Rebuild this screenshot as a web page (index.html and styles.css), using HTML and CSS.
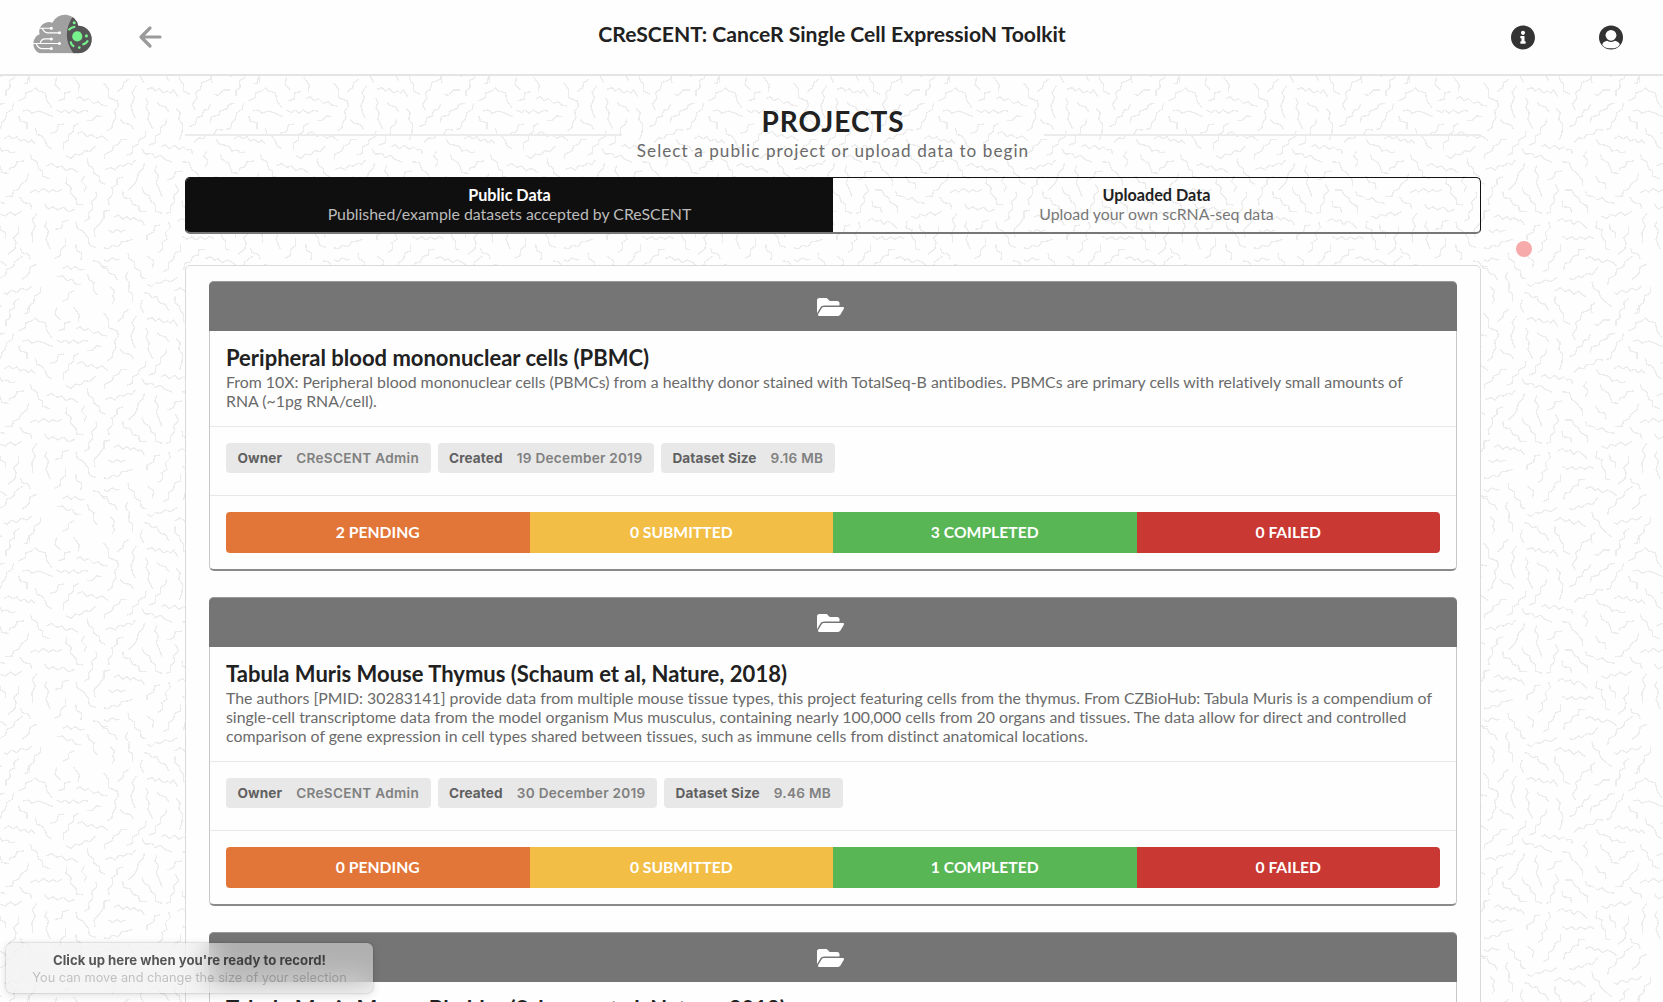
FILE: index.html
```html
<!DOCTYPE html>
<html lang="en">
<head>
<meta charset="utf-8">
<title>CReSCENT</title>
<link rel="stylesheet" href="styles.css">
</head>
<body>
<svg class="backdrop" aria-hidden="true">
<defs>
<pattern id="squiggles" width="690" height="690" patternUnits="userSpaceOnUse" patternTransform="translate(0 76) scale(.33333)">
<g id="strokes" fill="none" stroke="#ececec" stroke-width="4" shape-rendering="crispEdges">
<path transform="translate(306 0)" d="M5 20 20 40 20 65 45 75 50 90 38 105 42 125 32 140 30 155 15 165M80 10 65 20 62 35 45 48M103 30 90 50 97 65 87 90 92 110 100 125M135 40 150 35 160 45 172 38 185 50 198 45 205 52 215 42 228 62M330 0 325 10 300 20 295 40 280 50 285 65 272 85 280 102M335 55 350 58 365 42 385 42M473 -22 473 20M440 75 460 65 462 50 480 45 490 35 500 45 520 50 525 75 540 95M130 65 138 78 132 95 142 110 138 130 152 158M165 78 172 88 190 92 200 108M222 98 235 110 230 130 242 145 240 170 232 192M325 85 318 100 305 103 300 120 285 125 280 145 262 152M400 82 380 85 375 98 355 105 350 118 328 122 325 140M425 82 420 100 405 110 400 130 390 140 385 158 372 160M452 105 468 102 480 112 500 105 515 110 525 115 543 122M440 120 445 135 465 140 465 160M55 130 65 142 85 145 95 160M195 128 190 145 175 155 175 172 160 180 160 200 140 208M490 155 495 175 510 180 520 195 525 210 540 218M132 165 130 182 112 190 108 205 92 212 90 232 75 238M275 200 290 185 305 188 315 175 335 175 345 160 362 162M75 190 58 190 50 205 35 210 30 225 8 235 8 250M178 212 190 205 202 218 218 208 230 220 245 212 255 222 268 220 272 235M343 190 352 205 372 208 385 215 390 225 405 222 415 230 430 228M397 188 410 180 422 188 435 182 445 195 458 190 470 200 478 192 490 205M120 218 130 235 150 232 160 245 175 238 188 250 210 258M315 225 305 240 318 255 310 272M355 235 360 250 378 260 385 275 390 290 410 292M455 255 435 258 430 272 415 275 412 285M475 235 480 250 495 258 500 280 512 285 512 300 533 308M10 280 25 275 40 282 50 268 65 270 78 262 90 265 100 252M127 260 125 275 110 290 105 310 98 325 78 342M165 268 158 285 170 300 163 320 172 340 180 362M240 257 262 260 268 278 282 290 300 310 302 330M240 285 220 288 215 305 197 312M63 302 45 310 45 325 30 335 32 355 18 370 22 388M342 300 350 318 370 322 372 340M470 292 465 310 448 325 440 340 425 345 420 360 398 362M473 350 490 342 500 348 515 337 530 348 543 342 554 347 569 340M120 335 125 350 142 360 148 378 160 385 160 405 180 412M220 325 230 345 215 360 218 378 205 390 205 408 192 413M62 345 65 365 85 368 92 385 110 390 112 405 135 407M250 342 270 342 278 358 290 365 295 380 315 390 317 412M310 345 315 358 335 362 345 372 360 365 375 378 398 382M240 375 243 392 265 395 270 412M443 362 455 380 475 383 480 400M35 425 50 417 62 430 75 422 85 432 95 425 110 435 117 432 128 447M25 402 8 405 8 428M358 420 375 428 385 415 400 420 415 408 430 418 450 405M225 437 240 427 252 437 265 432 275 445 288 435 300 443 315 457M20 462 32 470 45 460 55 468 70 462M175 447 158 450 155 468 135 478 135 492M345 435 342 455 360 462 358 480 370 495 370 518 385 522M383 445 385 462 400 470 400 487M495 412 480 432 490 450 480 470 482 502M525 435 518 450 530 465 522 490 535 520M440 450 440 470 425 485 432 500 428 520 407 535M200 437 205 455 190 470 195 490 180 500 182 520 167 530M240 480 255 490 270 482 282 492 295 483 310 490 322 482 335 487M5 515 20 518 32 508 48 512 60 497 75 495 92 490M235 505 235 525 218 532 215 550 200 560 200 580 182 587M445 515 450 530 470 535 475 550M5 550 18 557 30 546 42 552 55 550M78 530 80 548 98 558 98 575 115 585 118 605 132 608M135 540 155 555 152 575M310 520 290 522 288 537 272 542 265 558 248 562 245 582M310 548 325 542 340 553 350 548 360 560 375 552 390 558 403 570M452 540 428 558 425 572 405 580 400 598 380 608 377 628M0 575 15 578 22 592 40 598 45 612M495 565 475 572 470 595 450 610M77 588 70 605 82 620 80 645 92 655 92 677M260 608 275 610 290 600 300 605 315 592 330 595 348 575M135 625 148 632 160 620 175 622 190 612 205 617 225 605M25 632 38 645 32 660 38 670 30 683M330 618 335 638 350 645 355 662 365 672 388 693M218 645 235 635 250 647 262 640 275 655 290 645 300 655 310 663M395 650 405 655 420 642 435 650 448 637 465 642 480 630M125 650 140 652 150 665 165 662 172 680 190 685 200 705M505 632 505 650 488 660 485 680 470 690 465 712 455 713M220 660 218 680 232 690 235 705 245 715 245 735 265 745M440 668 425 680 428 695 412 705 415 725 402 733 402 750M340 680 325 690 330 710M120 672 115 690 125 710"/>
<path transform="translate(0 12)" d="M170 -10 165 15 182 30M220 -10 238 15 235 35M212 35 195 38 192 58 175 62M228 57 240 50 252 62 265 55 280 70 295 65 305 75 320 78M170 90 185 98 195 90 207 100 220 90 235 100 250 92 265 93M260 122 275 122 290 107 305 110M192 132 175 135 170 155 150 160M238 130 222 137 220 155 205 165 205 180 190 190 190 210M232 160 248 155 262 170 275 163 290 175 305 168 325 182M198 228 215 235 225 222 240 225 255 212 270 215 288 198M262 235 265 255 280 265 282 280 298 290 300 305 315 312M140 258 155 250 170 262 185 258 198 272 215 265 235 278M200 290 198 310 213 322 212 340 228 355 230 372 248 375M252 288 245 305 260 320 252 335M288 335 290 350 275 365 278 385 265 400 268 415 252 425M133 372 145 388 160 380 172 390 190 382 205 395 225 388M330 390 312 395 310 415 300 430 282 450 285 470M208 420 188 425 185 445 165 448M228 425 232 445 250 455 265 475 268 495 288 503M197 475 197 497 182 508 180 528 165 535M227 492 230 512 245 520 243 540M280 543 295 545 305 558 325 560M190 565 203 558 212 568 226 560 240 570 256 568M262 582 268 600 282 608 280 630 292 645M170 590 188 588 200 602 216 598 226 612 244 614M222 632 205 640 206 656 190 664"/>
</g>
<use href="#strokes" x="-690"/><use href="#strokes" y="-690"/><use href="#strokes" x="-690" y="-690"/>
</pattern>
<symbol id="folder" viewBox="0 0 576 512"><path fill="#fff" d="M572.694 292.093L500.27 416.248A63.997 63.997 0 0 1 444.989 448H45.025c-18.523 0-30.064-20.093-20.731-36.093l72.424-124.155A64 64 0 0 1 152 256h399.964c18.523 0 30.064 20.093 20.73 36.093zM152 224h328v-48c0-26.51-21.49-48-48-48H272l-64-64H48C21.49 64 0 85.49 0 112v278.046l69.077-118.418C86.214 242.25 117.989 224 152 224z"/></symbol>
</defs>
<rect width="100%" height="100%" fill="url(#squiggles)"/>
</svg>

<header class="nav">
  <div class="nav-side">
    <svg class="logo" viewBox="0 0 60 40">
      <defs><clipPath id="cloud"><path d="M8.500 39.500A8 9.500 0 0 1 8.500 21 9.500 9.500 0 0 1 21 9.500 13.500 13.500 0 0 1 46.500 12.500 13.200 13.500 0 0 1 46.500 39.500Z"/></clipPath></defs>
      <g clip-path="url(#cloud)">
        <rect width="60" height="40" fill="#a0a0a0"/>
        <path fill="#555" d="M42 2Q28.500 22 42 40H60V2Z"/>
      </g>
      <g fill="none" stroke="#fff" stroke-width="1.200"><path d="M8 15H20M11 15Q13 19.500 17 19.500H27M0 30H28M5 30Q7 35 11 35H20M9 30Q10 25.500 14 25.500H20"/></g>
      <g fill="#fff"><circle cx="20" cy="15" r="1.500"/><circle cx="28" cy="19.500" r="1.500"/><circle cx="20" cy="25.500" r="1.500"/><circle cx="28" cy="30" r="1.500"/><circle cx="20" cy="35" r="1.500"/></g>
      <g fill="#77f28d"><circle cx="45.500" cy="23" r="5"/><circle cx="42.500" cy="9.500" r="1.500"/><circle cx="54.500" cy="22.500" r="1.500"/><circle cx="47.500" cy="34" r="1.300"/></g>
      <path d="M37 17Q39 14 43.500 13.500M39 28Q39.500 32 42.500 33M50.500 31Q54.500 30.500 56 27" fill="none" stroke="#77f28d" stroke-width="2"/>
    </svg>
    <svg class="back" viewBox="0 0 24 24"><path fill="none" stroke="#9a9a9a" stroke-width="3.200" stroke-linecap="round" stroke-linejoin="round" d="M12 3 3 12 12 21M3.500 12H22"/></svg>
  </div>
  <h1 class="nav-title">CReSCENT: CanceR Single Cell ExpressioN Toolkit</h1>
  <div class="nav-side nav-right">
    <svg class="round" viewBox="8 8 496 496"><path fill="#333" d="M256 8C119.043 8 8 119.083 8 256c0 136.997 111.043 248 248 248s248-111.003 248-248C504 119.083 392.957 8 256 8zm0 110c23.196 0 42 18.804 42 42s-18.804 42-42 42-42-18.804-42-42 18.804-42 42-42zm56 254c0 6.627-5.373 12-12 12h-88c-6.627 0-12-5.373-12-12v-24c0-6.627 5.373-12 12-12h12v-64h-12c-6.627 0-12-5.373-12-12v-24c0-6.627 5.373-12 12-12h64c6.627 0 12 5.373 12 12v100h12c6.627 0 12 5.373 12 12v24z"/></svg>
    <svg class="round" viewBox="0 0 24 24"><circle cx="12" cy="12" r="12" fill="#333"/><ellipse cx="12" cy="18.800" rx="8.600" ry="4" fill="#fff"/><circle cx="12" cy="9.900" r="6.600" fill="#333"/><circle cx="12" cy="9.800" r="5.400" fill="#fff"/></svg>
  </div>
</header>

<main class="page">
  <div class="heading">
    <div class="heading-text">
      <h2 class="heading-title">PROJECTS</h2>
      <p class="heading-sub">Select a public project or upload data to begin</p>
    </div>
  </div>
  <div class="tabs">
    <div class="tab tab-active"><b class="tab-name">Public Data</b><span class="tab-note">Published/example datasets accepted by CReSCENT</span></div>
    <div class="tab"><b class="tab-name">Uploaded Data</b><span class="tab-note">Upload your own scRNA-seq data</span></div>
  </div>
  <section class="panel">
    <article class="card">
      <div class="card-top"><svg class="folder"><use href="#folder"/></svg></div>
      <div class="card-body">
        <h3 class="card-title">Peripheral blood mononuclear cells (PBMC)</h3>
        <p class="card-text">From 10X: Peripheral blood mononuclear cells (PBMCs) from a healthy donor stained with TotalSeq-B antibodies. PBMCs are primary cells with relatively small amounts of<br>RNA (~1pg RNA/cell).</p>
      </div>
      <div class="labels">
        <span class="label"><b>Owner</b>CReSCENT Admin</span>
        <span class="label"><b>Created</b>19 December 2019</span>
        <span class="label"><b>Dataset Size</b>9.16 MB</span>
      </div>
      <div class="status"><div class="bar"><span class="pending">2 PENDING</span><span class="submitted">0 SUBMITTED</span><span class="completed">3 COMPLETED</span><span class="failed">0 FAILED</span></div></div>
    </article>
    <article class="card">
      <div class="card-top"><svg class="folder"><use href="#folder"/></svg></div>
      <div class="card-body">
        <h3 class="card-title">Tabula Muris Mouse Thymus (Schaum et al, Nature, 2018)</h3>
        <p class="card-text">The authors [PMID: 30283141] provide data from multiple mouse tissue types, this project featuring cells from the thymus. From CZBioHub: Tabula Muris is a compendium of<br>single-cell transcriptome data from the model organism Mus musculus, containing nearly 100,000 cells from 20 organs and tissues. The data allow for direct and controlled<br>comparison of gene expression in cell types shared between tissues, such as immune cells from distinct anatomical locations.</p>
      </div>
      <div class="labels">
        <span class="label"><b>Owner</b>CReSCENT Admin</span>
        <span class="label"><b>Created</b>30 December 2019</span>
        <span class="label"><b>Dataset Size</b>9.46 MB</span>
      </div>
      <div class="status"><div class="bar"><span class="pending">0 PENDING</span><span class="submitted">0 SUBMITTED</span><span class="completed">1 COMPLETED</span><span class="failed">0 FAILED</span></div></div>
    </article>
    <article class="card">
      <div class="card-top"><svg class="folder"><use href="#folder"/></svg></div>
      <div class="card-body">
        <h3 class="card-title">Tabula Muris Mouse Bladder (Schaum et al, Nature, 2018)</h3>
      </div>
    </article>
  </section>
</main>

<i class="pointer"></i>
<aside class="hint"><b class="hint-main">Click up here when you're ready to record!</b><span class="hint-sub">You can move and change the size of your selection</span></aside>
</body>
</html>
```

FILE: styles.css
```css
* { box-sizing: border-box; }
body {
  margin: 0;
  height: 1002px;
  overflow: hidden;
  background: #fefefe;
  color: #212121;
  font-family: Lato, "Liberation Sans", sans-serif;
  font-size: 15.860px;
  font-variant-ligatures: none;
}
h1, h2, h3, p { margin: 0; }
svg { display: block; }
.backdrop { position: absolute; inset: 0; width: 100%; height: 100%; z-index: -1; }

.nav {
  display: grid;
  grid-template-columns: 1fr auto 1fr;
  height: 76px;
  padding: 0 32px 2px;
  background: #fefefe;
  border-bottom: 2px solid #e4e4e4;
}
.nav-side { display: flex; align-items: flex-start; }
.logo { width: 61px; height: 40.700px; margin: 13px 0 0 -1px; }
.back { width: 24px; height: 24px; margin: 25px 0 0 46px; }
.nav-title { padding: 20.600px 0 0 1px; font-size: 21.130px; line-height: 27px; }
.nav-right { justify-content: flex-end; gap: 64px; padding: 25px 8px 0 0; }
.round { width: 24px; height: 25px; }

.page { width: 1296px; margin: 0 0 0 185px; }
.heading { display: flex; height: 101px; padding-top: 28px; }
.heading::before, .heading::after { content: ""; flex: 1; height: 2px; margin-top: 30px; background: #ececec; }
.heading-text { width: 422px; text-align: center; }
.heading-title { font-size: 28px; line-height: 34px; letter-spacing: 1px; }
.heading-sub { padding-top: 1px; color: #6a6a6a; font-size: 17.100px; line-height: 24px; letter-spacing: 1.060px; }

.tabs { display: flex; height: 57px; border: 1px solid #111; border-bottom: 2px solid #777; border-radius: 5px; overflow: hidden; }
.tab { flex: 1; display: flex; flex-direction: column; align-items: center; padding-top: 7px; line-height: 20px; }
.tab-active { background: #0f0f0f; color: #fff; }
.tab-name { font-size: 16.200px; line-height: 19px; }
.tab-note { color: #777; }
.tab-active .tab-note { color: #bcbcbc; }

.panel { height: 760px; margin-top: 31px; padding: 15px 23px; background: #fefefe; border: 1px solid #dadada; border-radius: 5px; }
.card { margin-bottom: 26px; border: 1px solid #c8c8c8; border-bottom: 2px solid #8a8a8a; border-radius: 5px; }
.card-top { display: flex; justify-content: center; align-items: center; height: 50px; margin: -1px -1px 0; padding-right: 5px; background: #757575; border-top: 1px solid #999; border-radius: 5px 5px 0 0; }
.folder { width: 27px; height: 24px; }
.card-body { padding: 14px 16px 16px; }
.card-title { font-size: 22px; line-height: 26px; white-space: nowrap; }
.card-text { color: #6a6a6a; line-height: 19px; white-space: nowrap; padding-top: 1px; }
.labels { display: flex; gap: 7px; height: 69px; padding: 16px 16px 0; border-top: 1px solid #e8e8e8; }
.label { height: 30px; padding: 0 11.500px; border-radius: 4px; background: #e8e8e8; color: #808080; font: 600 13.600px/30px Inter, sans-serif; letter-spacing: .280px; white-space: nowrap; }
.label b { margin-right: 14px; color: #606060; font-weight: 700; letter-spacing: .120px; }
.status { padding: 16px; border-top: 1px solid #e8e8e8; }
.bar { display: flex; height: 41px; border-radius: 4px; overflow: hidden; color: #fff; font-size: 15.700px; font-weight: 700; line-height: 41px; text-align: center; }
.bar span { flex: 1; }
.pending { background: #e27638; }
.submitted { background: #f2be45; }
.completed { background: #58b655; }
.failed { background: #c93832; }

.pointer { position: absolute; left: 1516px; top: 241px; width: 16px; height: 16px; border-radius: 50%; background: #f6aaaa; }
.hint {
  position: absolute; left: 6px; top: 943px; width: 367px; height: 50px;
  display: flex; flex-direction: column; align-items: center;
  padding-top: 9px;
  border-radius: 6px;
  background: rgba(235, 235, 235, .5);
  backdrop-filter: blur(14px);
  box-shadow: 0 0 2px rgba(0, 0, 0, .3), 0 2px 10px rgba(0, 0, 0, .12);
  font: 12.750px/17px Inter, sans-serif;
}
.hint-main { color: rgba(0, 0, 0, .65); font-size: 13.200px; }
.hint-sub { color: rgba(0, 0, 0, .22); }
```
